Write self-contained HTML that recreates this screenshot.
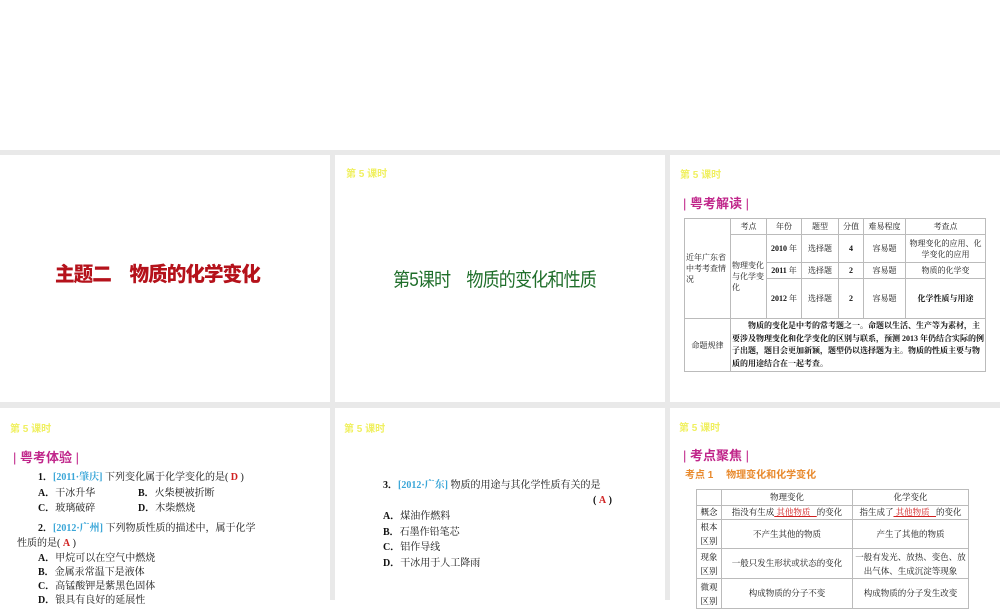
<!DOCTYPE html>
<html><head><meta charset="utf-8"><style>
*{margin:0;padding:0;box-sizing:border-box}
body{width:1000px;height:600px;overflow:hidden;background:#fff;position:relative;font-family:"Liberation Serif","Noto Serif CJK SC",serif;color:#111}
.g{position:absolute;background:#e9e9e9}
.a{position:absolute;white-space:nowrap}
.lbl{font-family:"Liberation Sans","Noto Sans CJK SC",sans-serif;font-size:10px;color:#f0f060;font-weight:bold}
.hd{font-family:"Liberation Sans","Noto Sans CJK SC",sans-serif;font-size:13px;font-weight:bold;color:#c0258a}
.t{font-size:10px;line-height:15.5px}
.blue{color:#3aa6d8;font-weight:bold}
.red{color:#d02020;font-weight:bold}
table{border-collapse:collapse;position:absolute;font-size:8px;font-family:"Liberation Serif","Noto Serif CJK SC",serif}
td{border:1px solid #bbb;text-align:center;padding:0 1px;line-height:11px}
</style></head><body>
<div class="g" style="left:0;top:150px;width:1000px;height:5px"></div>
<div class="g" style="left:0;top:402px;width:1000px;height:6px"></div>
<div class="g" style="left:330px;top:150px;width:5px;height:450px"></div>
<div class="g" style="left:665px;top:150px;width:5px;height:450px"></div>

<!-- slide1 -->
<div class="a" style="left:55px;top:258px;font-family:'Liberation Sans','Noto Sans CJK SC',sans-serif;font-weight:900;font-size:20px;color:#b5121b;letter-spacing:-1px;transform-origin:left;transform:scaleX(0.98)">主题二　物质的化学变化</div>

<!-- slide2 -->
<div class="a lbl" style="left:346px;top:165px">第 5 课时</div>
<div class="a" style="left:393px;top:265px;font-family:'Liberation Sans','Noto Sans CJK SC',sans-serif;font-size:19px;color:#1f6e2a;letter-spacing:-1px;transform-origin:left;transform:scaleX(0.9)">第5课时　物质的变化和性质</div>

<!-- slide3 -->
<div class="a lbl" style="left:680px;top:166px">第 5 课时</div>
<div class="a hd" style="left:683px;top:193px"><span style="font-weight:normal">|</span> 粤考解读 <span style="font-weight:normal">|</span></div>
<table style="left:684px;top:218px;width:302px;height:153px">
<tr style="height:16px"><td rowspan="4" style="width:46px;text-align:left">近年广东省中考考查情况</td><td style="width:36px">考点</td><td style="width:35px">年份</td><td style="width:37px">题型</td><td style="width:25px">分值</td><td style="width:42px">难易程度</td><td>考查点</td></tr>
<tr style="height:28px"><td rowspan="3" style="text-align:left">物理变化与化学变化</td><td><b>2010</b> 年</td><td>选择题</td><td><b>4</b></td><td>容易题</td><td>物理变化的应用、化学变化的应用</td></tr>
<tr style="height:16px"><td><b>2011</b> 年</td><td>选择题</td><td><b>2</b></td><td>容易题</td><td>物质的化学变</td></tr>
<tr style="height:40px"><td><b>2012</b> 年</td><td>选择题</td><td><b>2</b></td><td>容易题</td><td><b>化学性质与用途</b></td></tr>
<tr style="height:53px"><td>命题规律</td><td colspan="6" style="text-align:left;font-weight:bold;line-height:12.5px">　　物质的变化是中考的常考题之一。命题以生活、生产等为素材，主要涉及物理变化和化学变化的区别与联系，预测 2013 年仍结合实际的例子出题，题目会更加新颖，题型仍以选择题为主。物质的性质主要与物质的用途结合在一起考查。</td></tr>
</table>

<!-- slide4 -->
<div class="a lbl" style="left:10px;top:420px">第 5 课时</div>
<div class="a hd" style="left:13px;top:447px"><span style="font-weight:normal">|</span> 粤考体验 <span style="font-weight:normal">|</span></div>
<div class="a t" style="left:38px;top:470px"><b>1．</b><span class="blue">[2011·肇庆]</span> 下列变化属于化学变化的是( <span class="red">D</span> )</div>
<div class="a t" style="left:38px;top:486px"><b>A．</b>干冰升华</div>
<div class="a t" style="left:138px;top:486px"><b>B．</b>火柴梗被折断</div>
<div class="a t" style="left:38px;top:501px"><b>C．</b>玻璃破碎</div>
<div class="a t" style="left:138px;top:501px"><b>D．</b>木柴燃烧</div>
<div class="a t" style="left:38px;top:521px"><b>2．</b><span class="blue">[2012·广州]</span> 下列物质性质的描述中，属于化学</div>
<div class="a t" style="left:17px;top:536px">性质的是( <span class="red">A</span> )</div>
<div class="a t" style="left:38px;top:551px"><b>A．</b>甲烷可以在空气中燃烧</div>
<div class="a t" style="left:38px;top:565px"><b>B．</b>金属汞常温下是液体</div>
<div class="a t" style="left:38px;top:579px"><b>C．</b>高锰酸钾是紫黑色固体</div>
<div class="a t" style="left:38px;top:593px"><b>D．</b>银具有良好的延展性</div>

<!-- slide5 -->
<div class="a lbl" style="left:344px;top:420px">第 5 课时</div>
<div class="a t" style="left:383px;top:478px"><b>3．</b><span class="blue">[2012·广东]</span> 物质的用途与其化学性质有关的是</div>
<div class="a t" style="left:593px;top:493px"><b>(</b> <span class="red">A</span> <b>)</b></div>
<div class="a t" style="left:383px;top:509px"><b>A．</b>煤油作燃料</div>
<div class="a t" style="left:383px;top:525px"><b>B．</b>石墨作铅笔芯</div>
<div class="a t" style="left:383px;top:540px"><b>C．</b>铝作导线</div>
<div class="a t" style="left:383px;top:556px"><b>D．</b>干冰用于人工降雨</div>

<!-- slide6 -->
<div class="a lbl" style="left:679px;top:419px">第 5 课时</div>
<div class="a hd" style="left:683px;top:445px"><span style="font-weight:normal">|</span> 考点聚焦 <span style="font-weight:normal">|</span></div>
<div class="a" style="left:685px;top:466px;font-family:'Liberation Sans','Noto Sans CJK SC',sans-serif;font-size:10px;font-weight:bold;color:#e8892c">考点 1　 物理变化和化学变化</div>
<table style="left:696px;top:489px;width:273px;font-size:8.5px">
<tr style="height:16px"><td style="width:25px"></td><td style="width:131px">物理变化</td><td>化学变化</td></tr>
<tr style="height:14px"><td>概念</td><td>指没有生成<u style="color:#d02020">&nbsp;其他物质&nbsp;&nbsp;&nbsp;</u>的变化</td><td>指生成了<u style="color:#d02020">&nbsp;其他物质&nbsp;&nbsp;&nbsp;</u>的变化</td></tr>
<tr style="height:28px"><td style="line-height:14px">根本区别</td><td>不产生其他的物质</td><td>产生了其他的物质</td></tr>
<tr style="height:30px"><td style="line-height:14px">现象区别</td><td>一般只发生形状或状态的变化</td><td style="line-height:14px">一般有发光、放热、变色、放出气体、生成沉淀等现象</td></tr>
<tr style="height:30px"><td style="line-height:14px">微观区别</td><td>构成物质的分子不变</td><td>构成物质的分子发生改变</td></tr>
</table>
</body></html>
